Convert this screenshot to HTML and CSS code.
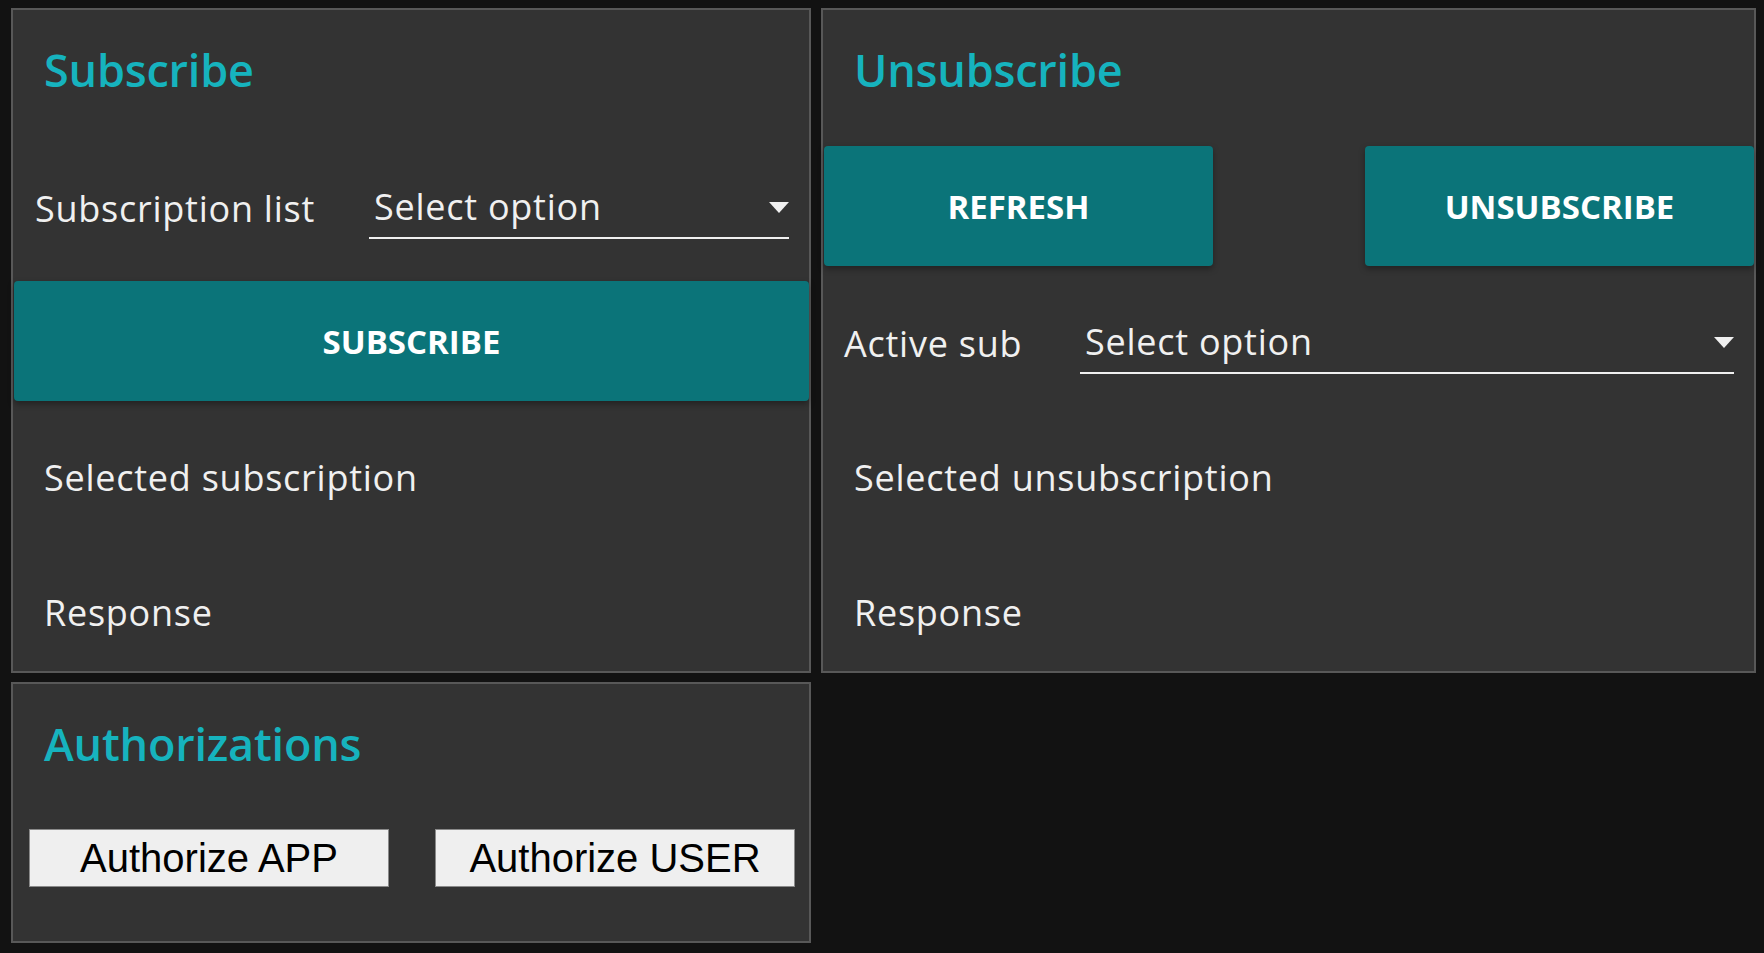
FILE: index.html
```html
<!DOCTYPE html>
<html lang="en">
<head>
<meta charset="utf-8">
<title>Subscriptions</title>
<link rel="stylesheet" href="styles.css">
</head>
<body>
<div class="grid">
  <section class="panel">
    <h2 class="title">Subscribe</h2>
    <div class="row row-sub">
      <span class="label label-sub">Subscription list</span>
      <div class="select select-sub"><span class="select-text">Select option</span><i class="caret"></i></div>
    </div>
    <button class="mbtn mbtn-full">SUBSCRIBE</button>
    <p class="text text-sel">Selected subscription</p>
    <p class="text text-resp">Response</p>
  </section>

  <section class="panel">
    <h2 class="title">Unsubscribe</h2>
    <div class="btn-pair">
      <button class="mbtn mbtn-half">REFRESH</button>
      <button class="mbtn mbtn-half">UNSUBSCRIBE</button>
    </div>
    <div class="row row-unsub">
      <span class="label label-unsub">Active sub</span>
      <div class="select select-unsub"><span class="select-text">Select option</span><i class="caret"></i></div>
    </div>
    <p class="text text-sel2">Selected unsubscription</p>
    <p class="text text-resp">Response</p>
  </section>

  <section class="panel panel-auth">
    <h2 class="title">Authorizations</h2>
    <div class="auth-row">
      <button class="nbtn">Authorize APP</button>
      <button class="nbtn">Authorize USER</button>
    </div>
  </section>
</div>
</body>
</html>
```

FILE: styles.css
```css
* { box-sizing: border-box; }

html, body {
  margin: 0;
  padding: 0;
  background: #121212;
  height: 953px;
  overflow: hidden;
}

body {
  font-family: "Open Sans", "Noto Sans", sans-serif;
  color: #f0f0f0;
}

.grid {
  display: grid;
  grid-template-columns: 800px 935px;
  grid-template-rows: 665px 261px;
  column-gap: 10px;
  row-gap: 9px;
  padding: 8px 0 0 11px;
}

.panel {
  background: #333333;
  border: 2px solid #585858;
  display: flex;
  flex-direction: column;
  align-items: stretch;
}

.title {
  margin: 32px 0 0 31px;
  font-size: 45px;
  line-height: 56px;
  font-weight: 600;
  letter-spacing: -0.2px;
  color: #16b3be;
}

.row {
  display: flex;
  align-items: flex-end;
}

.row-sub {
  margin-top: 87px;
  padding-left: 22px;
}

.row-unsub {
  margin-top: 54px;
  padding-left: 21px;
}

.label {
  font-size: 36px;
  line-height: 44px;
  letter-spacing: 0.75px;
  padding-bottom: 8px;
  white-space: nowrap;
}

.label-sub { width: 334px; }
.label-unsub { width: 236px; }

.select {
  display: flex;
  align-items: center;
  justify-content: space-between;
  border-bottom: 2px solid #f0f0f0;
  padding: 0 0 8px 5px;
}

.select-sub { width: 420px; }
.select-unsub { width: 654px; }

.select-text {
  font-size: 36px;
  line-height: 44px;
  letter-spacing: 0.75px;
  white-space: nowrap;
}

.caret {
  width: 0;
  height: 0;
  border-left: 10px solid transparent;
  border-right: 10px solid transparent;
  border-top: 11px solid #f0f0f0;
}

.mbtn {
  font-family: "Open Sans", "Noto Sans", sans-serif;
  font-weight: 700;
  font-size: 33px;
  color: #ffffff;
  background: #0b7479;
  border: none;
  border-radius: 4px;
  box-shadow: 0 3px 6px rgba(0, 0, 0, 0.35);
  height: 120px;
  padding: 0;
  display: flex;
  align-items: center;
  justify-content: center;
}

.mbtn-full {
  margin: 42px 0 0 1px;
}

.btn-pair {
  display: flex;
  justify-content: space-between;
  margin: 48px 0 0 1px;
}

.mbtn-half {
  width: 389px;
}

.text {
  margin: 0 0 0 31px;
  font-size: 36px;
  line-height: 44px;
  letter-spacing: 0.75px;
}

.text-sel { margin-top: 55px; }
.text-sel2 { margin-top: 82px; }
.text-resp { margin-top: 91px; }

.auth-row {
  display: flex;
  gap: 46px;
  margin: 57px 0 0 16px;
}

.nbtn {
  width: 360px;
  height: 58px;
  background: #efefef;
  border: 1px solid #8a8a8a;
  border-radius: 0;
  color: #000000;
  font-family: "Liberation Sans", Arial, sans-serif;
  font-size: 40px;
  padding: 0;
  display: flex;
  align-items: center;
  justify-content: center;
}
```
